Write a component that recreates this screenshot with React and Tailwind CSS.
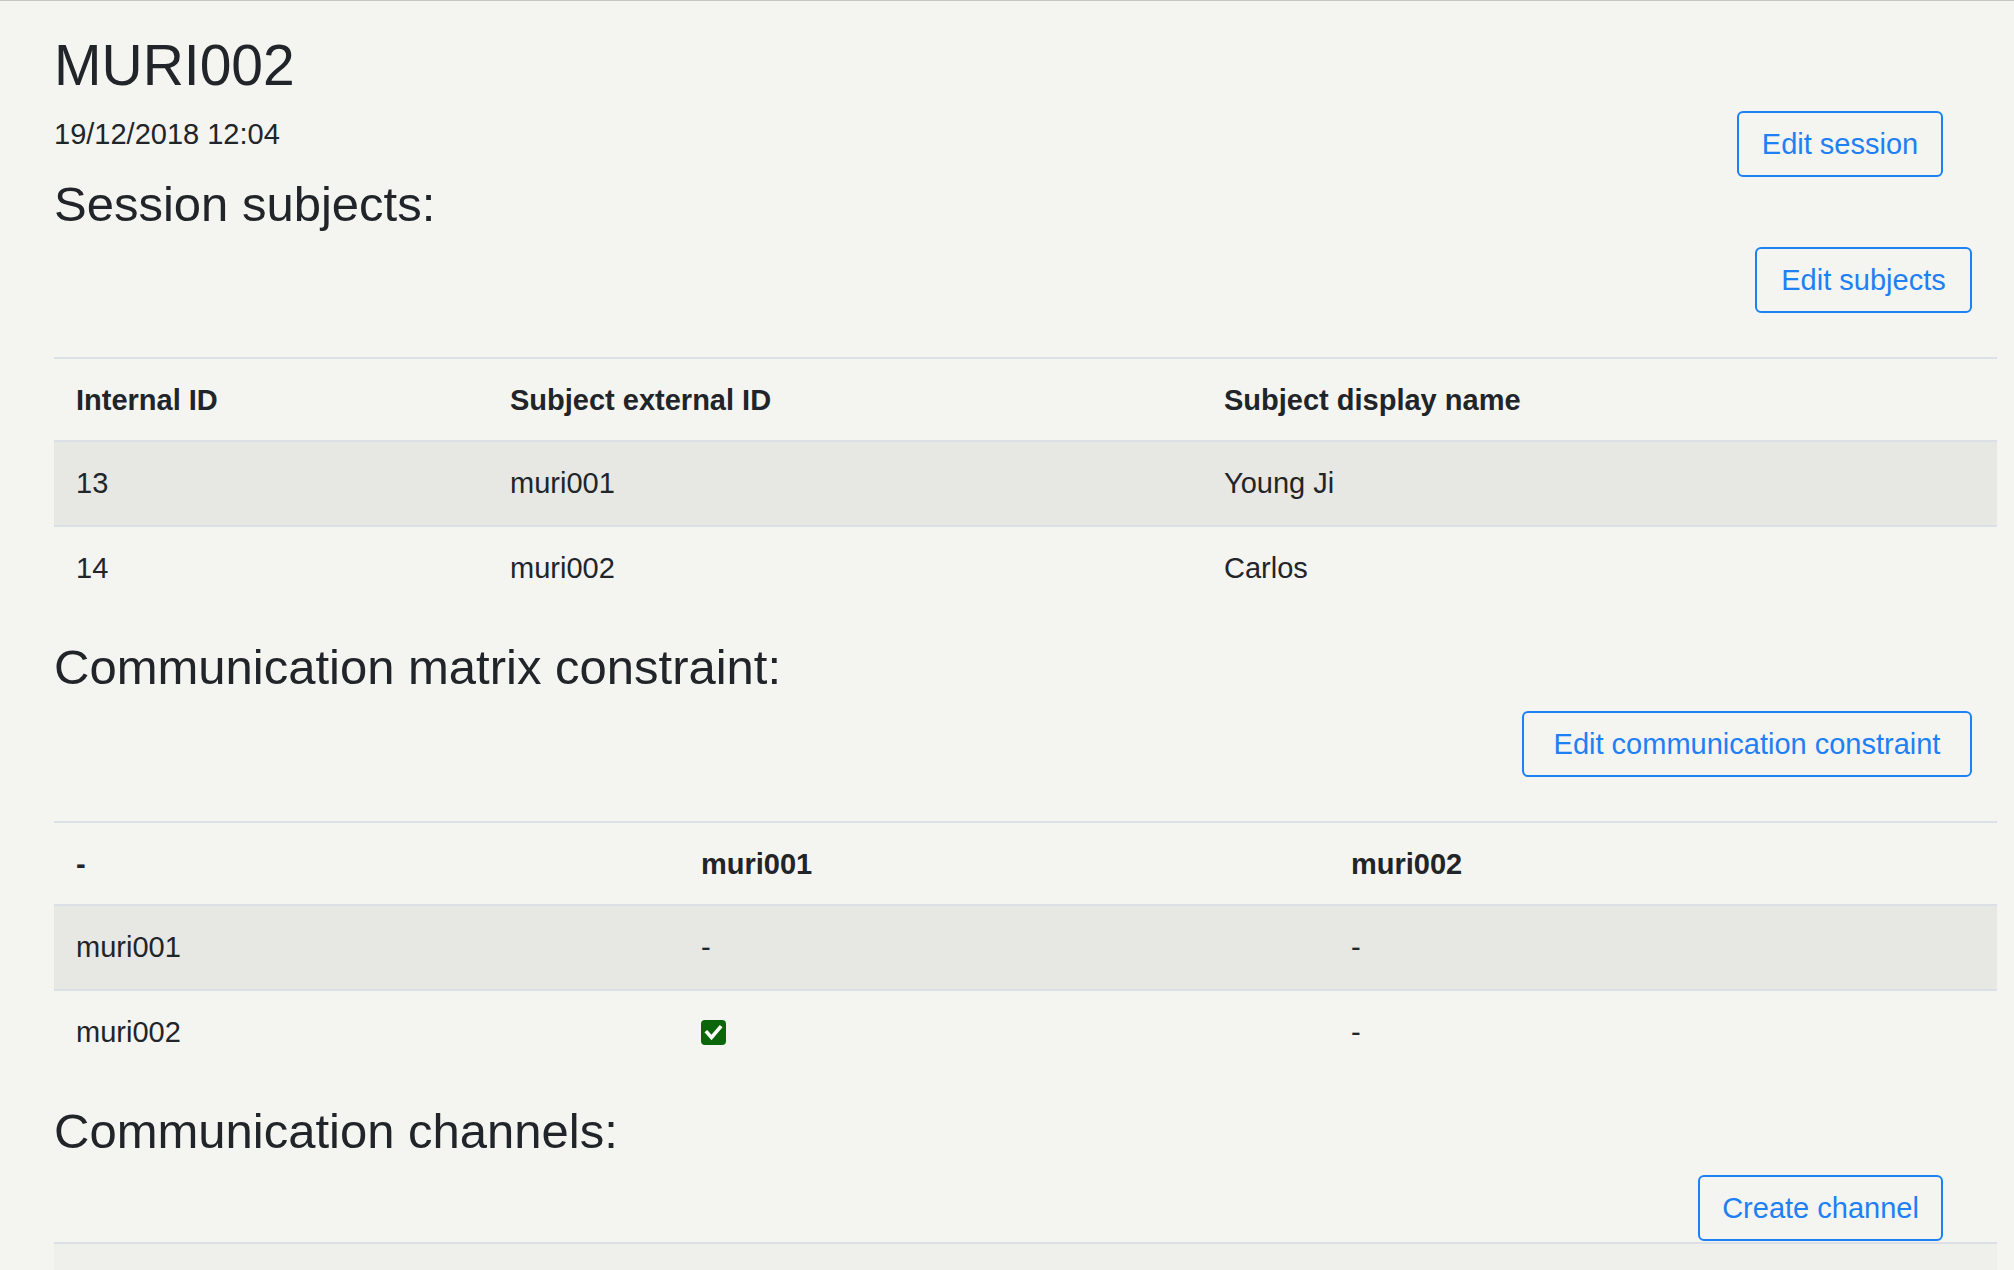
import React from 'react';

const subjects = [
    {id: 13, ext: 'muri001', name: 'Young Ji'},
    {id: 14, ext: 'muri002', name: 'Carlos'},
];

const CheckSquare = () => (
    <svg width="25" height="25" viewBox="0 0 25 25">
        <rect x="0" y="0" width="25" height="25" rx="4" fill="#0b650b"/>
        <path d="M6 12.5 L10.5 17.5 L19 7.5" fill="none" stroke="#ffffff" strokeWidth="3.6" strokeLinecap="square"/>
    </svg>
);

const OutlineButton = ({children, className}) => (
    <button
        className={`h-[66px] flex items-center justify-center whitespace-nowrap border-2 border-[#1d80f4] rounded-[6px] text-[#1d80f4] text-[29px] leading-none bg-transparent ${className}`}>
        {children}
    </button>
);

const Heading = ({children, className}) => (
    <h2 className={`text-[49px] leading-[58px] text-[#212529] ${className}`}>{children}</h2>
);

const App = () => {
    return (
        <div
            className="min-h-[1270px] bg-[#f4f4f0] border-t border-[#c6c6c4] pt-[30px] pl-[54px] pr-[17px] text-[#212529] overflow-hidden"
            style={{fontFamily: '"Liberation Sans", Arial, sans-serif'}}>
            <div className="flex justify-between items-start">
                <div>
                    <h1 className="text-[57px] leading-[68px]">MURI002</h1>
                    <div className="mt-[18px] text-[29px] leading-[35px]">19/12/2018 12:04</div>
                    <Heading className="mt-[23px]">Session subjects:</Heading>
                </div>
                <OutlineButton className="mt-[80px] mr-[54px] w-[206px]">Edit session</OutlineButton>
            </div>

            <div className="flex justify-end mt-[14px]">
                <OutlineButton className="mr-[25px] w-[217px]">Edit subjects</OutlineButton>
            </div>

            <div className="mt-[44px] text-[29px]">
                <div className="grid grid-cols-[434px_714px_1fr] h-[83px] border-t-2 border-[#dcdfe5] items-center font-bold pt-[2px]">
                    <div className="px-[22px]">Internal ID</div>
                    <div className="px-[22px]">Subject external ID</div>
                    <div className="px-[22px]">Subject display name</div>
                </div>
                {subjects.map((s, i) =>
                    <div key={s.id}
                         className={`grid grid-cols-[434px_714px_1fr] h-[85px] border-t-2 border-[#dcdfe5] items-center ${i % 2 === 0 ? 'bg-[#e7e7e3]' : ''}`}>
                        <div className="px-[22px]">{s.id}</div>
                        <div className="px-[22px]">{s.ext}</div>
                        <div className="px-[22px]">{s.name}</div>
                    </div>
                )}
            </div>

            <Heading className="mt-[28px]">Communication matrix constraint:</Heading>
            <div className="flex justify-end mt-[15px]">
                <OutlineButton className="mr-[25px] w-[450px]">Edit communication constraint</OutlineButton>
            </div>

            <div className="mt-[44px] text-[29px]">
                <div className="grid grid-cols-[625px_650px_1fr] h-[83px] border-t-2 border-[#dcdfe5] items-center font-bold pt-[2px]">
                    <div className="px-[22px]">-</div>
                    <div className="px-[22px]">muri001</div>
                    <div className="px-[22px]">muri002</div>
                </div>
                <div className="grid grid-cols-[625px_650px_1fr] h-[85px] border-t-2 border-[#dcdfe5] items-center bg-[#e7e7e3]">
                    <div className="px-[22px]">muri001</div>
                    <div className="px-[22px]">-</div>
                    <div className="px-[22px]">-</div>
                </div>
                <div className="grid grid-cols-[625px_650px_1fr] h-[85px] border-t-2 border-[#dcdfe5] items-center">
                    <div className="px-[22px]">muri002</div>
                    <div className="px-[22px] flex"><CheckSquare/></div>
                    <div className="px-[22px]">-</div>
                </div>
            </div>

            <Heading className="mt-[28px]">Communication channels:</Heading>
            <div className="flex justify-end mt-[15px]">
                <OutlineButton className="mr-[54px] w-[245px]">Create channel</OutlineButton>
            </div>
            <div className="mt-[1px] h-[60px] border-t-2 border-[#dcdfe5] bg-[#efefeb]"></div>
        </div>
    );
};

export default App;
